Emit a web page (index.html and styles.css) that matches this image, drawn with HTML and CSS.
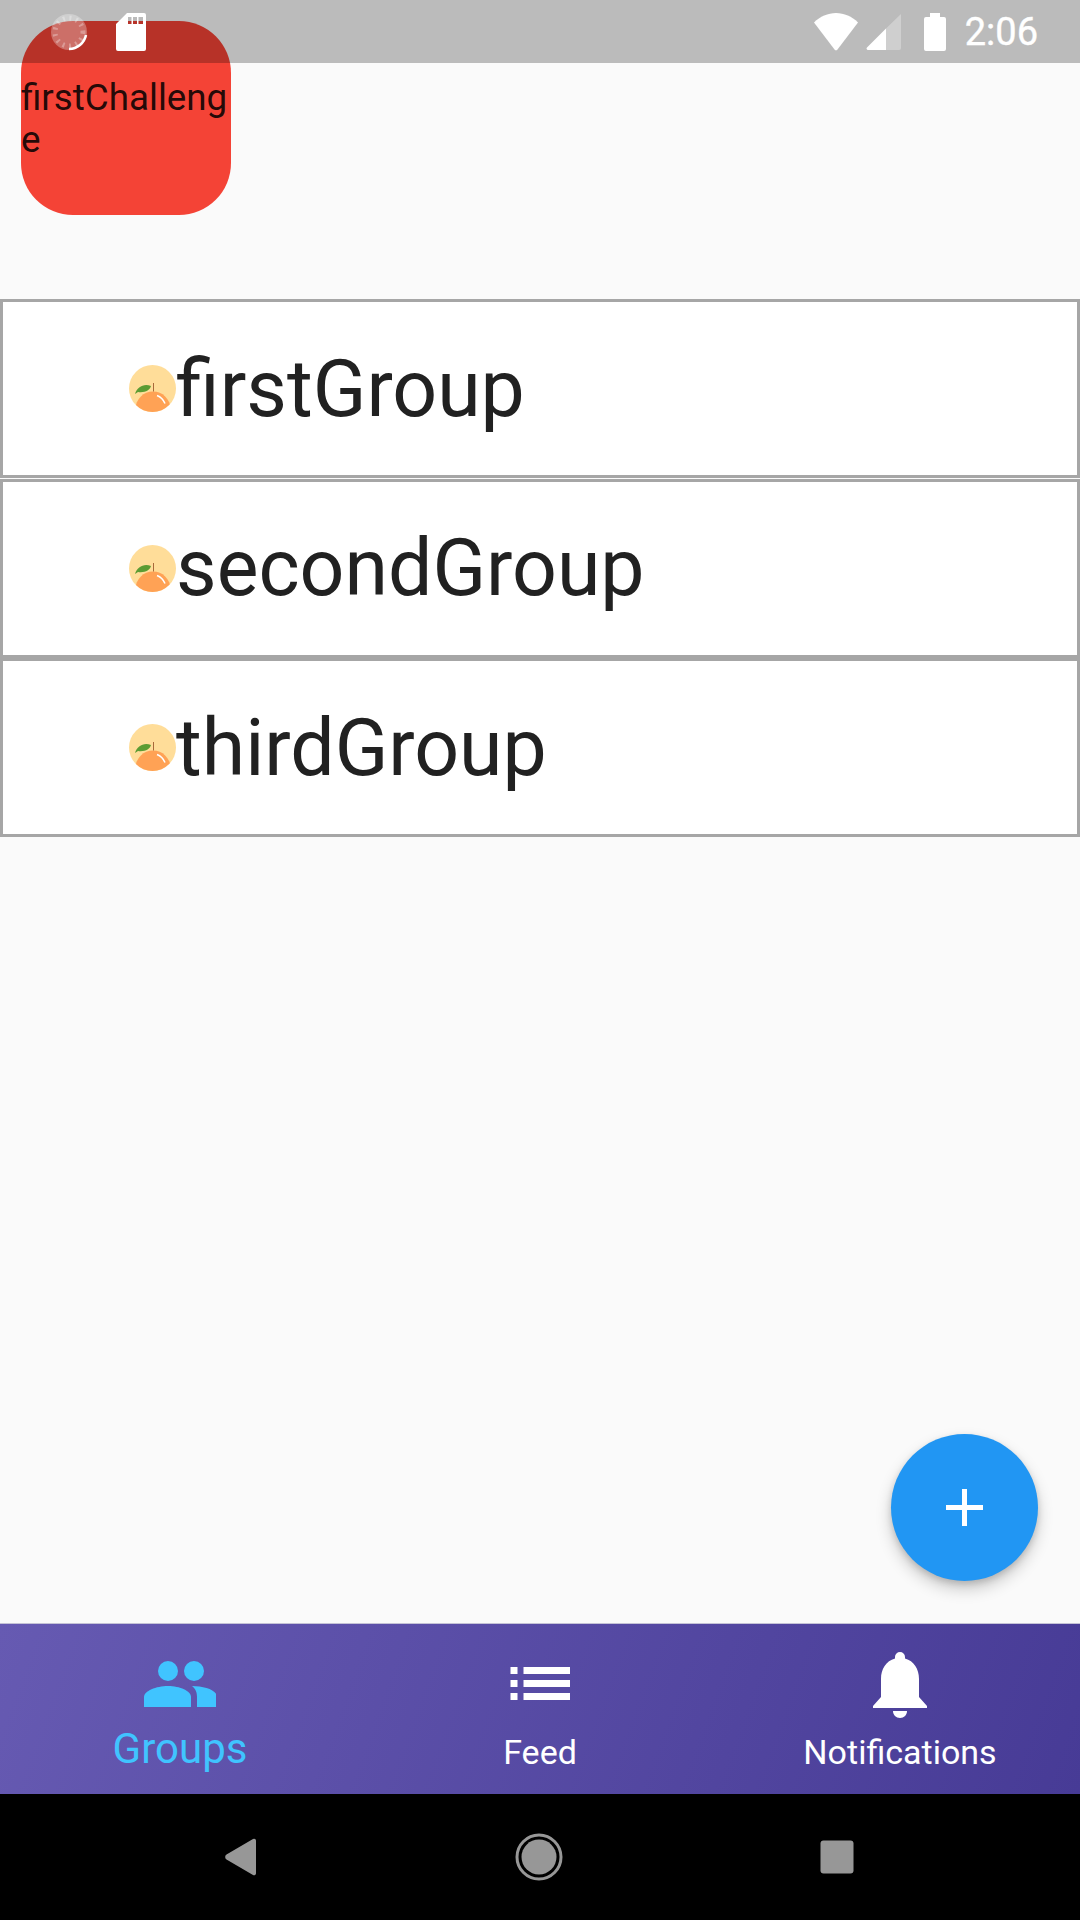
FILE: index.html
```html
<!DOCTYPE html>
<html lang="en">

<head>
    <meta charset="UTF-8">
    <meta name="viewport" content="width=device-width, initial-scale=1.0">
    <title>Groups</title>
    <link rel="stylesheet" href="styles.css">
</head>

<body>
    <div class="app">
        <div class="status-bar">
            <div class="status-left">
                <svg class="status-spinner" width="38" height="38" viewBox="0 0 38 38">
                    <circle cx="19" cy="19" r="18" fill="#fff" fill-opacity="0.3" />
                    <circle cx="19" cy="19" r="14" fill="none" stroke="#fff" stroke-opacity="0.3" stroke-width="5" stroke-dasharray="2 4.6" />
                    <path d="M36 22a17.500 17.500 0 0 1-17 14" fill="none" stroke="#fff" stroke-width="2.500" />
                </svg>
                <svg class="status-sd" width="30" height="38" viewBox="0 0 30 38">
                    <path fill="#fff" fill-rule="evenodd" d="M11 0H28a2 2 0 0 1 2 2V36a2 2 0 0 1-2 2H2a2 2 0 0 1-2-2V11ZM12 4V11H15.500V4ZM17 4V11H21V4ZM22.500 4V11H27V4Z" />
                </svg>
            </div>
            <div class="status-right">
                <svg class="status-wifi" width="44" height="38" viewBox="0 0 44 38">
                    <path fill="#fff" d="M0 9.500C6 3.500 14 0 22 0S38 3.500 44 9.500L23.500 36.500a2 2 0 0 1-3 0Z" />
                </svg>
                <svg class="status-signal" width="35" height="38" viewBox="0 0 35 38">
                    <path fill="#fff" fill-opacity="0.3" d="M20 15.500 35 1V35a2 2 0 0 1-2 2H20Z" />
                    <path fill="#fff" d="M20 15.500V37H2a1.500 1.500 0 0 1-1-2.600Z" />
                </svg>
                <svg class="status-battery" width="22" height="38" viewBox="0 0 22 38">
                    <path fill="#fff" d="M6 0H16V4H20a2 2 0 0 1 2 2V36a2 2 0 0 1-2 2H2a2 2 0 0 1-2-2V6a2 2 0 0 1 2-2H6Z" />
                </svg>
                <span class="status-time">2:06</span>
            </div>
        </div>

        <div class="content">
            <div class="challenge-card">firstChallenge</div>

            <div class="group-list">
                <div class="group-row">
                    <svg class="group-avatar" width="47" height="47" viewBox="0 0 47 47"><use href="#orange" /></svg>
                    <span class="group-name">firstGroup</span>
                </div>
                <div class="group-row">
                    <svg class="group-avatar" width="47" height="47" viewBox="0 0 47 47"><use href="#orange" /></svg>
                    <span class="group-name">secondGroup</span>
                </div>
                <div class="group-row">
                    <svg class="group-avatar" width="47" height="47" viewBox="0 0 47 47"><use href="#orange" /></svg>
                    <span class="group-name">thirdGroup</span>
                </div>
            </div>

            <button class="fab">
                <svg width="37" height="37" viewBox="0 0 37 37">
                    <path fill="#fff" d="M16 0H21V16H37V21H21V37H16V21H0V16H16Z" />
                </svg>
            </button>
        </div>

        <div class="tab-bar">
            <div class="tab tab-active">
                <svg width="72" height="72" viewBox="0 0 72 72">
                    <circle cx="24" cy="23" r="10" fill="#40c4ff" />
                    <circle cx="50" cy="23" r="10" fill="#40c4ff" />
                    <path fill="#40c4ff" d="M0 59V49C0 43 12 38 24 38S47 43 47 49V59Z" />
                    <path fill="#40c4ff" d="M48 38C60 38 73 42 73 49V59H53V49C53 45 52 41 48 38Z" />
                </svg>
                <span class="tab-label">Groups</span>
            </div>
            <div class="tab">
                <svg width="72" height="72" viewBox="0 0 72 72">
                    <path fill="#fff" d="M6.500 19H13.500V26H6.500ZM19.500 19H66V26H19.500ZM6.500 32H13.500V39H6.500ZM19.500 32H66V39H19.500ZM6.500 45H13.500V52H6.500ZM19.500 45H66V52H19.500Z" />
                </svg>
                <span class="tab-label">Feed</span>
            </div>
            <div class="tab">
                <svg width="72" height="72" viewBox="0 0 72 72">
                    <path fill="#fff" d="M36 4a5 5 0 0 1 5 5v1.500C50 13 55 21 55 31V49L63 58V60H9V58L17 49V31C17 21 22 13 31 10.500V9a5 5 0 0 1 5-5Z" />
                    <path fill="#fff" d="M29 63H43C43 67 40 70 36 70S29 67 29 63Z" />
                </svg>
                <span class="tab-label">Notifications</span>
            </div>
        </div>

        <div class="nav-bar">
            <svg width="48" height="48" viewBox="0 0 48 48">
                <path fill="#979797" d="M9.500 21.500 36 6a2 2 0 0 1 3 2V40a2 2 0 0 1-3 2L9.500 26.500a3 3 0 0 1 0-5Z" />
            </svg>
            <svg width="48" height="48" viewBox="0 0 48 48">
                <circle cx="24" cy="24" r="22" fill="none" stroke="#979797" stroke-width="3" />
                <circle cx="24" cy="24" r="17.500" fill="#979797" />
            </svg>
            <svg width="48" height="48" viewBox="0 0 48 48">
                <rect x="7.500" y="7.500" width="33" height="33" rx="3" fill="#979797" />
            </svg>
        </div>
    </div>

    <svg class="defs" width="0" height="0">
        <defs>
            <clipPath id="orange-clip">
                <circle cx="23.500" cy="23.500" r="23.500" />
            </clipPath>
            <g id="orange">
                <circle cx="23.500" cy="23.500" r="23.500" fill="#ffdd99" />
                <g clip-path="url(#orange-clip)">
                    <circle cx="24" cy="44" r="17.500" fill="#ffa255" />
                </g>
                <path fill="#5c9c33" d="M6 29C8 22 15 18 22 21C21 25 16 28 9 27Z" />
                <path stroke="#a8693a" stroke-width="1" d="M24.500 18V26.500" />
                <path fill="none" stroke="#fff" stroke-width="1.500" d="M28 30.500C32 32 34.500 35 36 38.500" />
            </g>
        </defs>
    </svg>
</body>

</html>
```

FILE: styles.css
```css
body {
    margin: 0;
    font-family: "Roboto", sans-serif;
    background-color: #000;
}

.defs {
    position: absolute;
}

.app {
    position: relative;
    width: 1080px;
    height: 1920px;
    display: flex;
    flex-direction: column;
    overflow: hidden;
}

.status-bar {
    position: absolute;
    top: 0;
    left: 0;
    right: 0;
    z-index: 2;
    height: 63px;
    padding: 0 42px 0 50px;
    box-sizing: border-box;
    display: flex;
    justify-content: space-between;
    align-items: center;
    background-color: rgba(0, 0, 0, 0.25);
}

.status-left,
.status-right {
    display: flex;
    align-items: center;
}

.status-sd {
    margin-left: 28px;
}

.status-signal {
    margin-left: 8px;
}

.status-battery {
    margin-left: 23px;
}

.status-time {
    margin-left: 19px;
    font-size: 38px;
    color: #fff;
    -webkit-text-stroke: 0.4px #fff;
}

.content {
    position: relative;
    flex: 1;
    background-color: #fafafa;
    padding-top: 21px;
}

.challenge-card {
    width: 210px;
    height: 194px;
    margin-left: 21px;
    padding-top: 56px;
    box-sizing: border-box;
    border-radius: 52px;
    background-color: #f44336;
    color: rgba(0, 0, 0, 0.87);
    font-size: 36.75px;
    line-height: 42px;
    word-break: break-all;
}

.group-list {
    margin-top: 84px;
}

.group-row {
    height: 179px;
    margin-bottom: 0.5px;
    box-sizing: border-box;
    padding-left: 126px;
    display: flex;
    align-items: center;
    background-color: #fff;
    border: 3px solid #a6a6a6;
}

.group-avatar {
    flex-shrink: 0;
}

.group-name {
    font-size: 78.75px;
    color: #212121;
}

.fab {
    position: absolute;
    right: 42px;
    bottom: 42px;
    width: 147px;
    height: 147px;
    padding: 0;
    border: none;
    border-radius: 50%;
    display: flex;
    justify-content: center;
    align-items: center;
    background-color: #2196f3;
    box-shadow: 0 8px 16px rgba(0, 0, 0, 0.2), 0 3px 6px rgba(0, 0, 0, 0.14);
}

.tab-bar {
    height: 171px;
    box-sizing: border-box;
    display: flex;
    border-top: 1px solid #c4c2d6;
    background: linear-gradient(110deg, #665ab2, #473b96);
}

.tab {
    width: 360px;
    padding-top: 24px;
    display: flex;
    flex-direction: column;
    align-items: center;
    color: #fff;
}

.tab-label {
    margin-top: 10px;
    font-size: 34px;
    line-height: 44px;
}

.tab-active {
    color: #40c4ff;
}

.tab-active .tab-label {
    margin-top: 7px;
    font-size: 42px;
}

.nav-bar {
    height: 126px;
    padding-right: 2px;
    box-sizing: border-box;
    display: flex;
    justify-content: center;
    align-items: center;
    gap: 250px;
    background-color: #000;
}
```
